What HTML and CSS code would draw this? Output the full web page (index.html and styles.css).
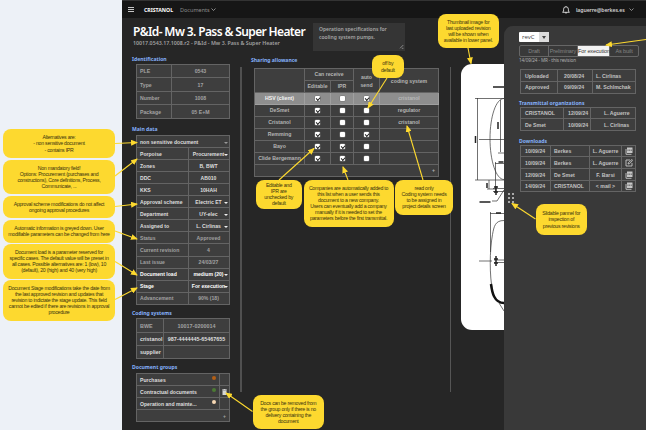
FILE: index.html
```html
<!DOCTYPE html>
<html lang="en">
<head>
<meta charset="utf-8">
<title>Cristanol documents</title>
<link rel="stylesheet" href="styles.css">
</head>
<body>
<div class="page">
  <div class="gutter"></div>
  <div class="app">
    <header class="topbar">
      <div class="burger"><i></i><i></i><i></i></div>
      <b class="brand">CRISTANOL</b>
      <span class="nav">Documents</span>
      <svg class="chev" viewBox="0 0 5 3"><path d="M.5.5l2 2 2-2"/></svg>
      <svg class="bell" viewBox="0 0 8 8"><path d="M.6 6.3h6.8L6.4 5V3.2a2.4 2.4 0 0 0-4.8 0V5zM3 6.5q1 1.4 2 0M4 .2v.7"/></svg>
      <span class="user">laguerre@berkes.es</span>
      <svg class="chev last" viewBox="0 0 5 3"><path d="M.5.5l2 2 2-2"/></svg>
    </header>
    <div class="body">
      <div class="left">
        <div class="head">
          <div class="titles">
            <h1>P&amp;Id- Mw 3. Pass &amp; Super Heater</h1>
            <p class="sub">10017.0543.17.1008.r2 - P&amp;Id - Mw 3. Pass &amp; Super Heater</p>
          </div>
          <div class="desc">Operation specifications for<br>cooling system pumps.<svg viewBox="0 0 5 5"><path d="M1 4.3L4.3 1M2.8 4.3h1.6"/></svg></div>
        </div>
        <div class="cols">
          <section class="props">
            <h2>Identification</h2>
            <div class="grid ident">
              <div>PLE</div><div>0543</div>
              <div>Type</div><div>17</div>
              <div>Number</div><div>1008</div>
              <div>Package</div><div>05 E+M</div>
            </div>
            <h2 class="h-main">Main data</h2>
            <div class="grid main">
              <div class="wide on">non sensitive document<i class="dd dim"></i></div>
              <div class="on">Porpoise</div><div class="on">Procurement<i class="dd"></i></div>
              <div class="on">Zones</div><div class="on">B, BWT</div>
              <div class="on">DDC</div><div class="on">AB010</div>
              <div class="on">KKS</div><div class="on">10HAH</div>
              <div class="on">Approval scheme</div><div class="on">Electric ET<i class="dd"></i></div>
              <div class="on">Department</div><div class="on">UY-elec<i class="dd"></i></div>
              <div class="on">Assigned to</div><div class="on">L. Cirlinas<i class="dd"></i></div>
              <div>Status</div><div>Approved</div>
              <div>Current revision</div><div>4</div>
              <div>Last issue</div><div>24/03/27</div>
              <div class="on hi">Document load</div><div class="on hi">medium (20)<i class="dd"></i></div>
              <div class="on hi">Stage</div><div class="on hi">For execution<i class="dd"></i></div>
              <div>Advancement</div><div>90% (18)</div>
            </div>
            <h2 class="h-cod">Coding systems</h2>
            <div class="grid coding">
              <div>BWE</div><div>10017-0200014</div>
              <div class="on">cristanol</div><div class="on">987-4444445-65467655</div>
              <div class="on">supplier</div><div></div>
            </div>
            <h2 class="h-grp">Document groups</h2>
            <div class="grid groups">
              <div class="on">Purchases<i class="dot orange"></i></div><div></div>
              <div class="on">Contractual documents<i class="dot green"></i></div><div><svg class="bin" viewBox="0 0 5 6"><path d="M.5 1.5h4V6h-4zM0 .5h1.5V0h2v.5H5v.7H0z"/></svg></div>
              <div class="on">Operation and mainte...<i class="dot cream"></i></div><div></div>
              <div class="wide plus">+</div>
            </div>
          </section>
          <div class="rule"></div>
          <section class="share">
            <h2>Sharing allowance</h2>
            <div class="grid sharing">
              <div class="tall"></div><div class="two">Can receive</div><div class="tall auto">auto<br>send</div><div class="tall auto">coding system</div>
              <div>Editable</div><div>IPR</div>
              <div class="sel">HSV (client)</div><div class="sel"><i class="cb c"></i></div><div class="sel"><i class="cb"></i></div><div class="sel"><i class="cb c"></i></div><div class="sel faint">cristanol</div>
              <div>DeSmet</div><div><i class="cb c"></i></div><div><i class="cb"></i></div><div><i class="cb"></i></div><div>regulator</div>
              <div>Cristanol</div><div><i class="cb c"></i></div><div><i class="cb"></i></div><div><i class="cb"></i></div><div>cristanol</div>
              <div>Remming</div><div><i class="cb c"></i></div><div><i class="cb"></i></div><div><i class="cb c"></i></div><div></div>
              <div>Bayo</div><div><i class="cb c"></i></div><div><i class="cb c"></i></div><div><i class="cb"></i></div><div></div>
              <div>Clide Bergemann</div><div><i class="cb c"></i></div><div><i class="cb c"></i></div><div><i class="cb"></i></div><div></div>
              <div class="all plus">+</div>
            </div>
          </section>
          <div class="rule two-r"></div>
          <div class="thumb">
            <svg viewBox="461 64 43 266">
              <g class="ln">
                <path d="M475 98.500h29M477.500 98v82M475 180h29M479 139.500h25M504 98.500c-8 0-14 18-14 40s6 41 14 41M500.500 100v52M498 153h6M495.500 162v30M495 163.500h9M489 180v9M487 189h8M493 188.500h11M493 191.500h11M504 190l-7 11h-5M490.500 212v40M490 213.500h14M504 220.500c-9 0-10 6-11.500 14-3 16-3 42 0 56M479 261h13M494 260h10M494 262.500h10M499 303l5 8"/>
              </g>
              <path class="hv" d="M491 284c1 8 3 19 13 19"/>
              <path class="mk" d="M493 87h11M475.500 136v7M498 122v7M498.500 162h5M487 183v5M496 186v9M494 187h4M494 192h4M479.500 202h11M496 213h5M496 256v10M494 259h4M494 263h4"/>
            </svg>
          </div>
        </div>
      </div>
      <aside class="panel">
        <div class="rev"><span>revC</span><b><i class="dd2"></i></b></div>
        <div class="tabs"><span>Draft</span><span>Preliminary</span><span class="act">For execution</span><span>As built</span></div>
        <p class="note">14/09/24 - MR - this revision</p>
        <div class="grid up">
          <div>Uploaded</div><div>20/08/24</div><div>L. Cirlinas</div>
          <div>Approved</div><div>09/09/24</div><div>M. Schlmchak</div>
        </div>
        <h2 class="h-tr">Transmittal organizations</h2>
        <div class="grid tr">
          <div>CRISTANOL</div><div>12/09/24</div><div>L. Aguerre</div>
          <div>De Smet</div><div>10/09/24</div><div>L. Cirlinas</div>
        </div>
        <h2 class="h-dl">Downloads</h2>
        <div class="grid dl">
          <div>10/09/24</div><div>Berkes</div><div>L. Aguerre</div><div><svg class="ic" viewBox="0 0 8 8"><path class="o" d="M1 2v5.300h5.500"/><path class="f" d="M2 .5h5.500V6H2z"/><path class="d" d="M3 2.500v1.500M4.700 2.500v1.500M6.300 2.500v1.500"/></svg></div>
          <div>10/09/24</div><div>Berkes</div><div>L. Aguerre</div><div><svg class="ic" viewBox="0 0 8 8"><path class="o" d="M5 1H1v6h6V4M3 5l.5-1.500L7 .5l.8.8L4.500 4.700z"/></svg></div>
          <div>12/09/24</div><div>De Smet</div><div>F. Barsi</div><div><svg class="ic" viewBox="0 0 8 8"><path class="o" d="M1 2v5.300h5.500"/><path class="f" d="M2 .5h5.500V6H2z"/><path class="d" d="M3 2.500v1.500M4.700 2.500v1.500M6.300 2.500v1.500"/></svg></div>
          <div>14/09/24</div><div>CRISTANOL</div><div>&lt; mail &gt;</div><div><svg class="ic" viewBox="0 0 8 8"><path class="o" d="M1 2v5.300h5.500"/><path class="f" d="M2 .5h5.500V6H2z"/><path class="d" d="M3 2.500v1.500M4.700 2.500v1.500M6.300 2.500v1.500"/></svg></div>
        </div>
        <div class="grip"><i></i><i></i><i></i><i></i><i></i><i></i></div>
      </aside>
    </div>
  </div>
  <svg class="arrows" viewBox="0 0 646 430">
    <defs><marker id="a" markerUnits="userSpaceOnUse" markerWidth="7" markerHeight="6" refX="6" refY="3" orient="auto"><path d="M0 0l7 3L0 6z" fill="#fdd92f"/></marker></defs>
    <g>
      <path marker-end="url(#a)" d="M115 143.500L137 142.500"/>
      <path marker-end="url(#a)" d="M115 176L137 159"/>
      <path marker-end="url(#a)" d="M115 206.500L137 204"/>
      <path marker-end="url(#a)" d="M115 231L137 239"/>
      <path marker-end="url(#a)" d="M115 261.500L137 275"/>
      <path marker-end="url(#a)" d="M115 299.500L137 288"/>
      <path marker-end="url(#a)" d="M387 78L368 108"/>
      <path marker-end="url(#a)" d="M279 180L314 148.500"/>
      <path marker-end="url(#a)" d="M348 180L343 167"/>
      <path marker-end="url(#a)" d="M423 180L407 126"/>
      <path marker-end="url(#a)" d="M468 48L471 63.500"/>
      <path marker-end="url(#a)" d="M535.500 219L512 203.500"/>
      <path marker-end="url(#a)" d="M252.500 411.500L226 393"/>
      <path marker-end="url(#a)" d="M646 39.500L606 45"/>
    </g>
  </svg>
  <div class="call c1">Alternatives are:<br>- non sensitive document<br>- contains IPR</div>
  <div class="call c2">Non mandatory field!<br>Options: Procurement (purchases and<br>constructions), Core definitions, Process,<br>Communicate, ...</div>
  <div class="call c3">Approval scheme modifications do not affect<br>ongoing approval procedures</div>
  <div class="call c4">Automatic information is greyed down. User<br>modifiable parameters can be changed from here</div>
  <div class="call c5">Document load is a parameter reserved for<br>specific cases. The default value will be preset in<br>all cases. Possible alternatives are: 1 (low), 10<br>(default), 20 (high) and 40 (very high)</div>
  <div class="call c6">Document Stage modifications take the date from<br>the last approved revision and updates that<br>revision to indictate the stage update. This field<br>cannot be edited if there are revisions in approval<br>procedure</div>
  <div class="call c7">Thumbnail image for<br>last uploaded revision<br>will be shown when<br>available in lower panel.</div>
  <div class="call c8">off by<br>default</div>
  <div class="call c9">Editable and<br>IPR are<br>unchecked by<br>default</div>
  <div class="call c10">Companies are automatically added to<br>this list when a user sends this<br>document to a new company.<br>Users can eventually add a company<br>manually if it is needed to set the<br>parameters before the first transmittal.</div>
  <div class="call c11">read only<br>Coding system needs<br>to be assigned in<br>project details screen</div>
  <div class="call c12">Slidable pannel for<br>inspection of<br>previous revisions</div>
  <div class="call c13">Docs can be removed from<br>the group only if there is no<br>delivery containing the<br>document</div>
</div>
</body>
</html>
```
FILE: styles.css
```css
* { box-sizing: border-box; }
body { margin: 0; font-family: "Liberation Sans", Arial, sans-serif; font-size: 5.2px; color: #c6c6c6; }
.page { position: relative; display: flex; width: 646px; height: 430px; overflow: hidden; }
.gutter { width: 122px; background: #edf1f7; }
.app { width: 524px; background: #262626; border-top: 1px solid #333; display: flex; flex-direction: column; }
h1, h2, p { margin: 0; white-space: nowrap; }
.topbar { height: 17px; background: #161616; display: flex; align-items: center; font-family: "Noto Sans", sans-serif; flex: none; padding-left: 6px; }
.burger { width: 6px; margin-right: 10px; }
.burger i { display: block; height: 1px; background: #c6c6c6; margin: 1px 0; }
.brand { width: 36px; color: #fff; font-size: 5.2px; }
.nav { width: 31px; color: #8d8d8d; font-size: 5.5px; }
.chev { width: 5px; height: 3px; fill: none; stroke: #a8a8a8; stroke-width: .8; }
.bell { width: 8px; height: 8px; margin-left: auto; margin-right: 6px; fill: none; stroke: #e0e0e0; stroke-width: .9; }
.user { width: 50px; font-weight: 600; color: #d4d4d4; font-size: 5.2px; letter-spacing: -.1px; }
.last { margin-left: 3px; margin-right: 12px; }
.body { display: flex; flex: 1; }
.left { width: 382px; }
.head { display: flex; height: 35px; padding-left: 11px; }
.titles { width: 180px; padding-top: 5px; }
h1 { font: 600 12px/17px "Noto Sans", sans-serif; color: #fff; letter-spacing: -.62px; }
.sub { font: 600 5.3px/7px "Noto Sans", sans-serif; color: #a0a0a0; }
.desc { position: relative; width: 92px; height: 28px; margin-top: 5px; background: #353535; padding: 2px 6px; font: 600 5px/8px "Noto Sans", sans-serif; color: #a8a8a8; white-space: nowrap; }
.desc svg { position: absolute; right: 1px; bottom: 2px; width: 5px; height: 5px; stroke: #a8a8a8; stroke-width: .7; fill: none; }
.cols { display: flex; height: 377px; }
h2 { font: 700 5.1px/8px "Noto Sans", sans-serif; color: #85b1fb; }
.props { width: 108px; padding: 2px 0 0 10px; }
.rule { width: 2px; height: 325px; margin-left: 10px; margin-top: 14px; background: #505050; }
.share { width: 207px; padding: 3px 0 0 9px; }
.two-r { width: 1px; margin-left: 1px; background: #555; height: 325px; }
.thumb { width: 43px; height: 266px; margin: 11px 0 0 10px; background: #fff; border-radius: 11px 0 0 11px; overflow: hidden; }
.thumb svg { display: block; width: 43px; height: 266px; fill: none; stroke: #333; }
.ln { stroke-width: .7; }
.hv { stroke-width: 2.5; stroke: #111; }
.mk { stroke-width: 1.5; stroke: #222; }

.grid { display: grid; background: #3e3e3e; border: solid #646464; border-width: 1px 0 0 1px; white-space: nowrap; font-weight: 600; }
.grid > div { display: flex; align-items: center; justify-content: center; border: solid #646464; border-width: 0 1px 1px 0; position: relative; text-align: center; min-width: 0; padding-top: .5px; }
.props .grid { width: 94px; margin-left: 4px; font-weight: 700; color: #a2a2a2; }
.props .grid > div:nth-child(odd) { justify-content: flex-start; padding-left: 3px; }
.props .grid .on { color: #dedede; }
.props .grid .hi { color: #fff; }
.ident { margin-top: 1px; grid-template-columns: 35px 58px; grid-auto-rows: 13.4px; }
.h-main { margin-top: 6px; }
.main { margin-top: 2.500px; grid-template-columns: 52px 41px; grid-auto-rows: 12.05px; }
.grid .wide { grid-column: 1 / -1; }
.props .main > div:nth-child(n+2):nth-child(even) { justify-content: flex-start; padding-left: 3px; }
.props .main > div:nth-child(n+2):nth-child(odd) { justify-content: center; padding-left: 0; padding-right: 1px; }
.dd { position: absolute; right: 1px; top: 5.500px; border: solid transparent; border-width: 2.500px 2px 0; border-top-color: #eee; }
.dim { border-top-color: #999; }
.h-cod { margin-top: 4px; }
.coding { margin-top: 1.500px; grid-template-columns: 27px 66px; grid-auto-rows: 13.4px; font-size: 5.4px; }
.h-grp { margin-top: 4px; }
.groups { margin-top: 2px; grid-template-columns: 83px 10px; grid-auto-rows: 12px; }
.groups, .main { font-size: 5.100px; }
.props .grid > .plus:nth-child(n), .share .plus { justify-content: flex-end; padding-right: 3px; }
.dot { position: absolute; right: 3px; top: 2px; width: 4px; height: 4px; border-radius: 50%; }
.orange { background: #b45f15; }
.green { background: #4c7a34; }
.cream { background: #f8d9b4; }
.bin { width: 5px; height: 6px; fill: #d5d5d5; }

.sharing { width: 185px; margin: 4px 0 0 3px; grid-template-columns: 50px 26px 23px 26px 59px; grid-template-rows: repeat(9, 12px); color: #b4b4b4; line-height: 7.500px; }
.tall { grid-row: span 2; }
.sharing > .auto { padding-top: 2px; }
.two { grid-column: span 2; }
.grid .all { grid-column: 1 / -1; }
.sharing > .sel { background: #8e8e8e; border-color: #a0a0a0; color: #f4f4f4; font-weight: 700; }
.sharing > .faint { color: #b8b8b8; }
.cb { width: 5px; height: 5px; background: #fff; border-radius: 1px; position: relative; box-shadow: 0 0 0 .5px #777; }
.c::after { content: ""; position: absolute; left: 1px; top: 1px; width: 3px; height: 1.5px; border: solid #222; border-width: 0 0 1px 1px; transform: rotate(-45deg); }

.panel { position: relative; width: 142px; background: #393939; border-radius: 9px 0 0 0; margin-top: 8px; padding: 6px 0 0 15px; color: #c2c2c2; }
.rev { display: flex; width: 30px; height: 10px; background: #fff; color: #444; font: 6px/10px "Open Sans", sans-serif; border-radius: 1px; }
.rev span { width: 20px; padding-left: 3px; }
.rev b { width: 10px; background: #dcdcdc; display: flex; align-items: center; justify-content: center; }
.dd2 { border: solid transparent; border-width: 3px 2px 0; border-top-color: #444; }
.tabs { display: flex; width: 120px; height: 12px; margin-top: 3px; border: 1px solid #666; border-radius: 2px; font-size: 5.500px; line-height: 10px; letter-spacing: -.1px; color: #858585; text-align: center; white-space: nowrap; }
.tabs span { width: 29px; border-right: 1px solid #666; }
.tabs .act { width: 32px; background: #f2f2f2; color: #333; }
.tabs span:last-child { width: 28px; border: 0; }
.note { font: 4.600px/7px "Noto Sans", sans-serif; letter-spacing: -.1px; margin-top: 0; color: #b0b0b0; }
.panel .grid { margin-left: 1px; width: 116px; }
.panel .grid > div { justify-content: flex-start; padding-left: 4px; }
.panel .up { margin-top: 5px; grid-template-columns: 37px 35px 43px; grid-auto-rows: 11.800px; }
.panel .up > div:nth-child(3n+2) { padding-left: 6px; }
.panel .up > div:nth-child(3n) { padding-left: 3px; }
.h-tr { margin-top: 5px; }
.tr { margin-top: 0; grid-template-columns: 43px 27px 45px; grid-auto-rows: 11.500px; }
.panel .tr > div:nth-child(3n+2) { padding-left: 4px; }
.panel .tr > div:nth-child(3n) { padding-left: 13px; }
.h-dl { margin-top: 6px; }
.dl { margin-top: 0; grid-template-columns: 30px 39px 32px 14px; grid-auto-rows: 11.700px; }
.panel .dl > div:nth-child(4n+2) { padding-left: 3px; }
.panel .dl > div:nth-child(4n+3), .panel .dl > div:nth-child(4n) { justify-content: center; padding-left: 0; }
.ic { width: 8px; height: 8px; }
.ic .f { fill: #c6c6c6; }
.ic .o { fill: none; stroke: #c6c6c6; stroke-width: .9; }
.ic .d { stroke: #555; stroke-width: .8; }
.grip { position: absolute; left: 4px; top: 167px; display: grid; grid-template-columns: 2px 2px; gap: 2px; }
.grip i { width: 2px; height: 2px; border-radius: 50%; background: #d0d0d0; }

.arrows { position: absolute; left: 0; top: 0; width: 646px; height: 430px; fill: none; stroke: #fdd92f; stroke-width: 1.1; }
.arrows marker path { stroke: none; }
.call { position: absolute; display: grid; place-content: center; text-align: center; background: #fdd92f; color: #3c340f; border-radius: 8px; font-size: 5.2px; line-height: 6.05px; letter-spacing: -.27px; word-spacing: .1px; white-space: nowrap; }
.c1 { left: 3px; top: 129px; width: 112px; height: 29px; }
.c2 { left: 3px; top: 160px; width: 112px; height: 34px; }
.c3 { left: 3px; top: 195.500px; width: 112px; height: 22.500px; }
.c4 { left: 3px; top: 219.500px; width: 112px; height: 23px; }
.c5 { left: 3px; top: 243.500px; width: 112px; height: 35.500px; }
.c6 { left: 3px; top: 279.500px; width: 112px; height: 41.500px; }
.c7 { left: 437.500px; top: 14px; width: 61.500px; height: 34px; }
.c8 { left: 372px; top: 55px; width: 31.500px; height: 23px; }
.c9 { left: 256px; top: 179.500px; width: 45.500px; height: 29.500px; }
.c10 { left: 303.500px; top: 179.500px; width: 90px; height: 47px; }
.c11 { left: 395px; top: 179.500px; width: 58px; height: 35.500px; }
.c12 { left: 535.500px; top: 204px; width: 51.500px; height: 31px; }
.c13 { left: 252.500px; top: 395px; width: 71.500px; height: 34px; }
```
